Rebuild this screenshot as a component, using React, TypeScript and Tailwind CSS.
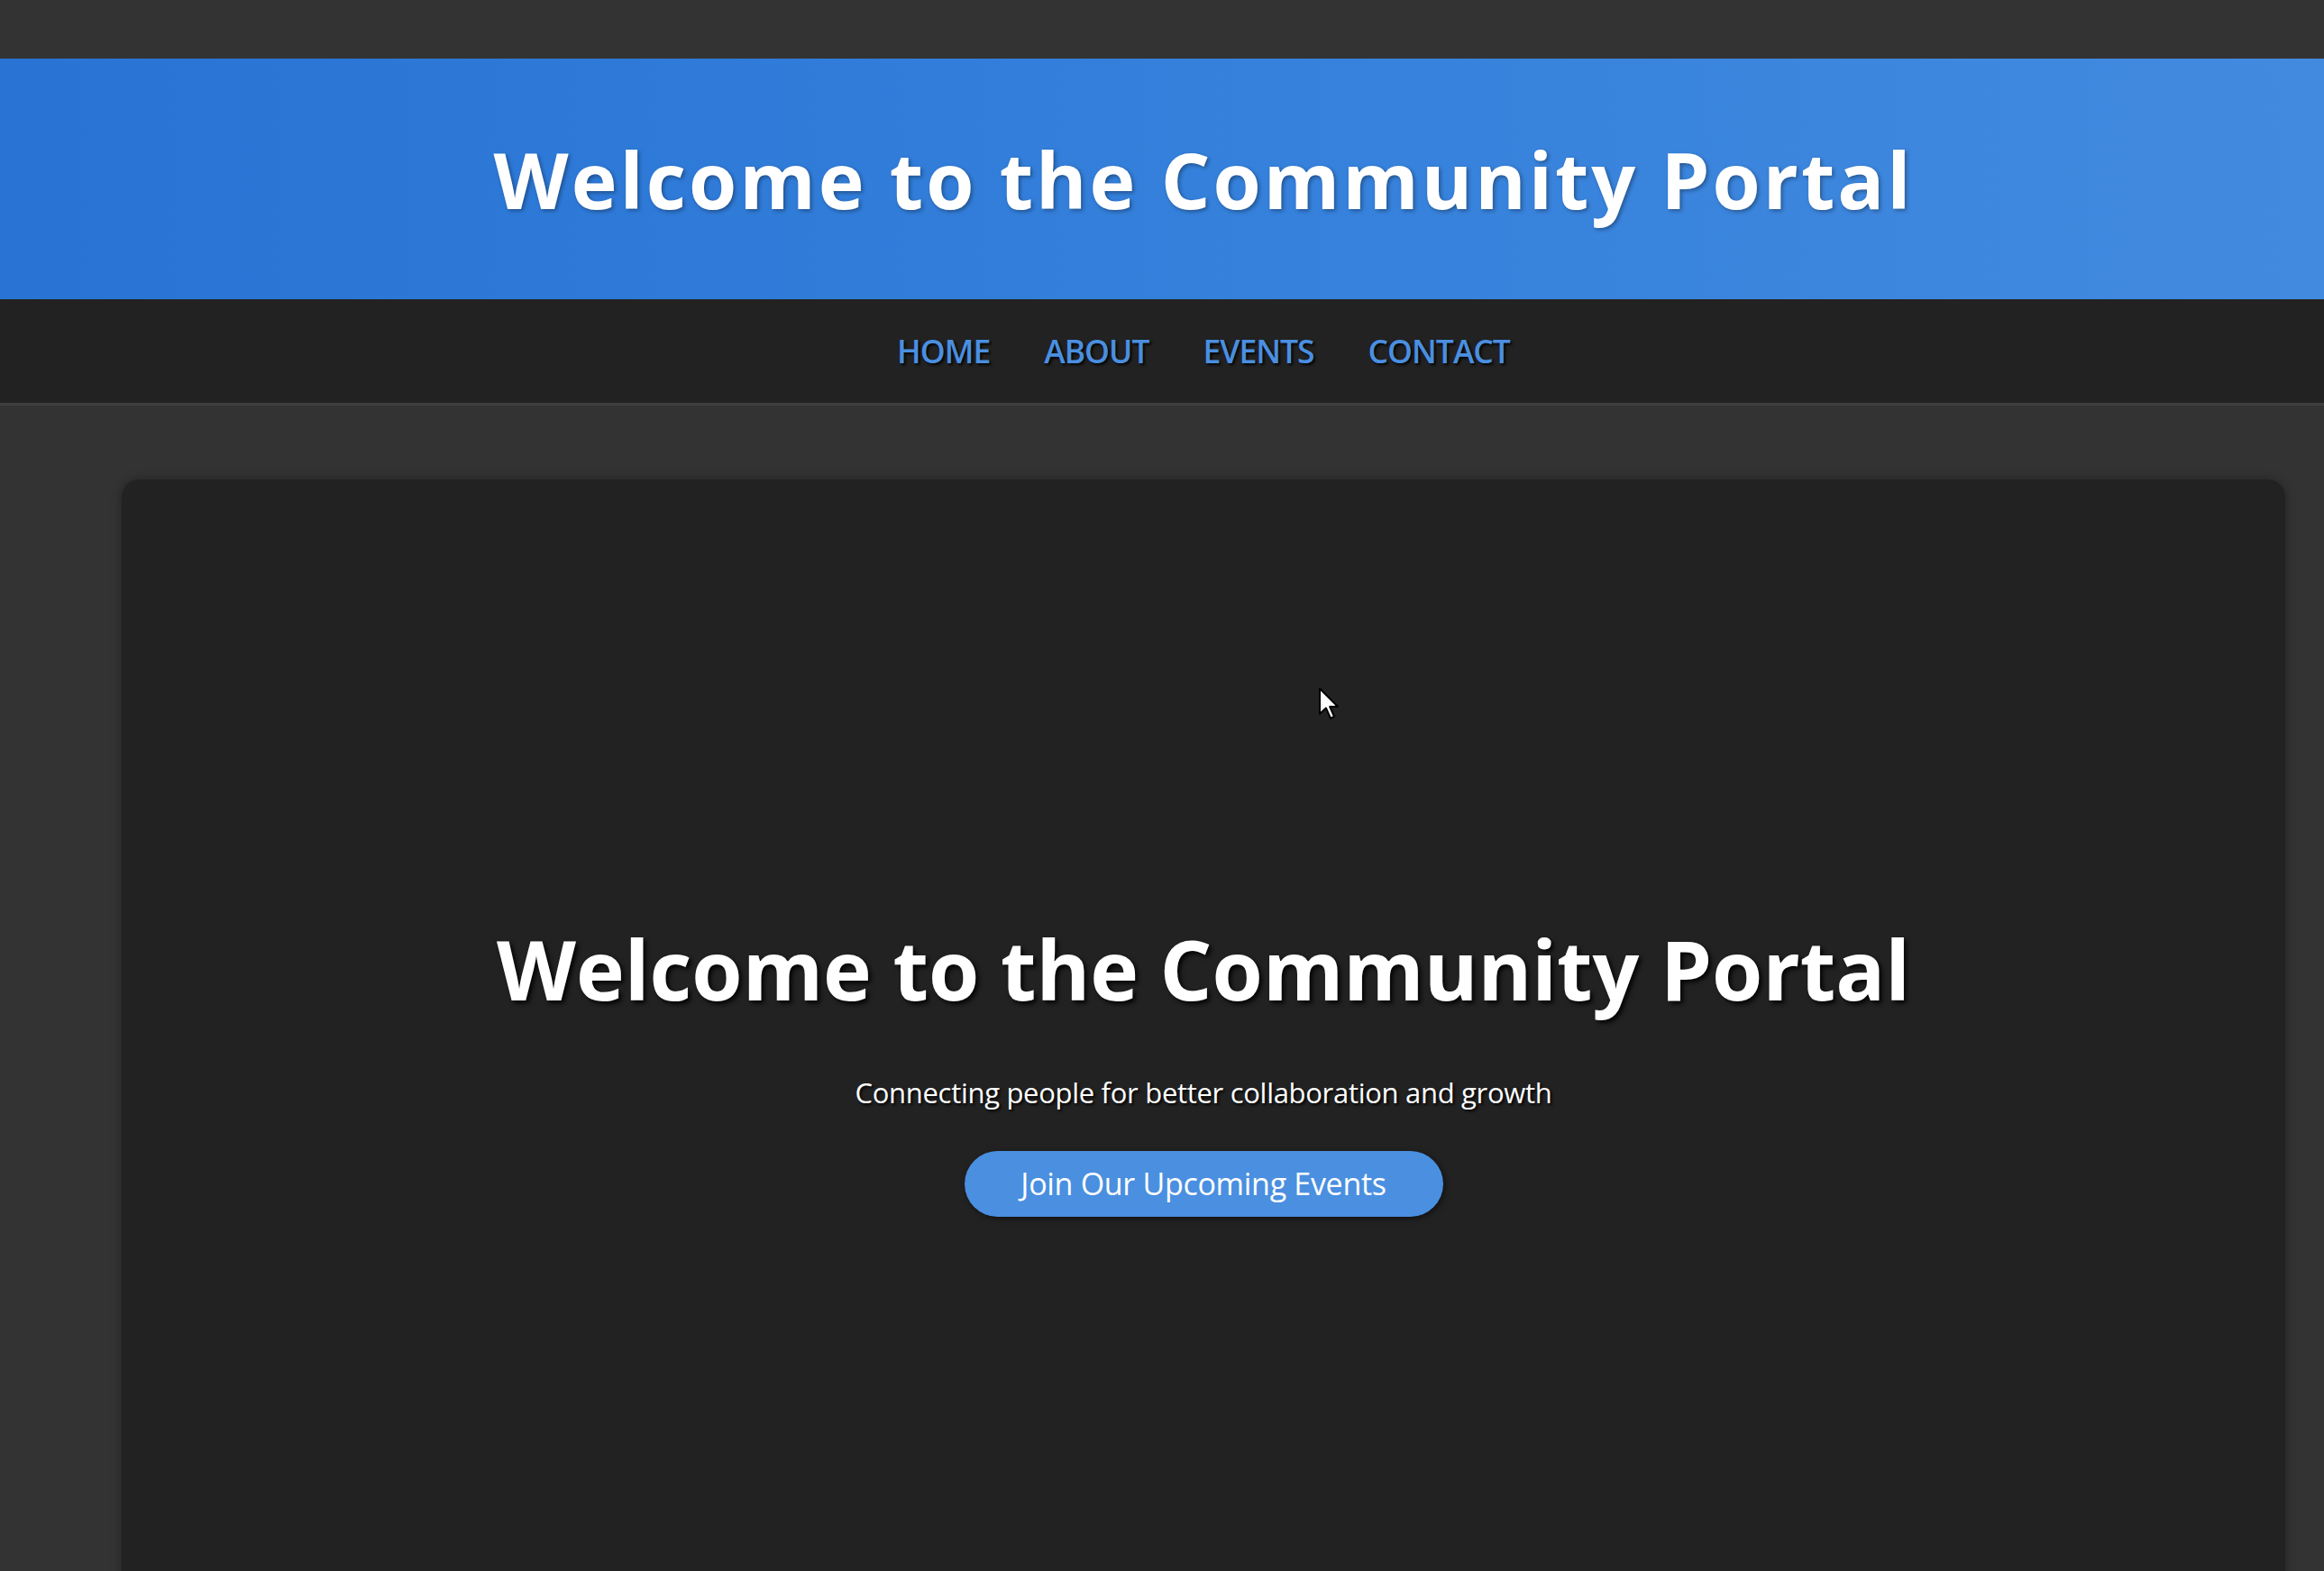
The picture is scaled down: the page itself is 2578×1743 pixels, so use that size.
import React from "react";

const navLinks = ["HOME", "ABOUT", "EVENTS", "CONTACT"];

function Cursor() {
  return (
    <svg
      className="absolute left-[1462px] top-[762px]"
      width="24"
      height="38"
      viewBox="0 0 12 19"
    >
      <path
        d="M1 1 L1 15 L4.5 11.8 L7 17.5 L9 16.6 L6.6 11 L11 11 Z"
        fill="#fff"
        stroke="#000"
        strokeWidth="1"
        strokeLinejoin="round"
      />
    </svg>
  );
}

export default function App() {
  return (
    <div className="relative h-screen w-full overflow-hidden bg-[#333]">
      {/* page is a bit wider than the window, so it sits off-centre */}
      <div className="w-[2670px] pt-[65px] font-['Open_Sans',sans-serif]">
        {/* header */}
        <header className="flex h-[267px] items-center justify-center bg-gradient-to-r from-[#2873d4] via-[#3480db] to-[#438be0]">
          <h1 className="text-[86px] font-bold tracking-[3px] text-white [text-shadow:2px_2px_4px_rgba(0,0,0,0.35)]">
            Welcome to the Community Portal
          </h1>
        </header>

        {/* nav */}
        <nav className="flex h-[118px] items-center justify-center gap-[60px] border-b-[3px] border-[#3f3f3f] bg-[#222]">
          {navLinks.map((link) => (
            <a
              key={link}
              href="#"
              className="text-[35.5px] font-semibold tracking-[-1px] text-[#4a8fe0] [text-shadow:2px_2px_3px_rgba(0,0,0,0.9)]"
            >
              {link}
            </a>
          ))}
        </nav>

        {/* main */}
        <main className="mx-[135px] pt-[82px]">
          <section className="flex h-[1300px] flex-col items-center rounded-[20px] bg-[#222] pt-[487px] shadow-[0_0_12px_rgba(0,0,0,0.35)]">
            <h2 className="text-[91px] font-bold leading-tight text-white [text-shadow:3px_3px_5px_rgba(0,0,0,0.9)]">
              Welcome to the Community Portal
            </h2>
            <p className="mt-[56px] text-[31px] tracking-[-0.3px] text-white [text-shadow:2px_2px_3px_rgba(0,0,0,0.9)]">
              Connecting people for better collaboration and growth
            </p>
            <button className="mt-[42px] h-[73px] w-[531px] rounded-full bg-[#4a8fe0] text-[34px] tracking-[-0.3px] text-white shadow-[2px_2px_6px_rgba(0,0,0,0.5)]">
              Join Our Upcoming Events
            </button>
          </section>
        </main>
      </div>

      <Cursor />
    </div>
  );
}
